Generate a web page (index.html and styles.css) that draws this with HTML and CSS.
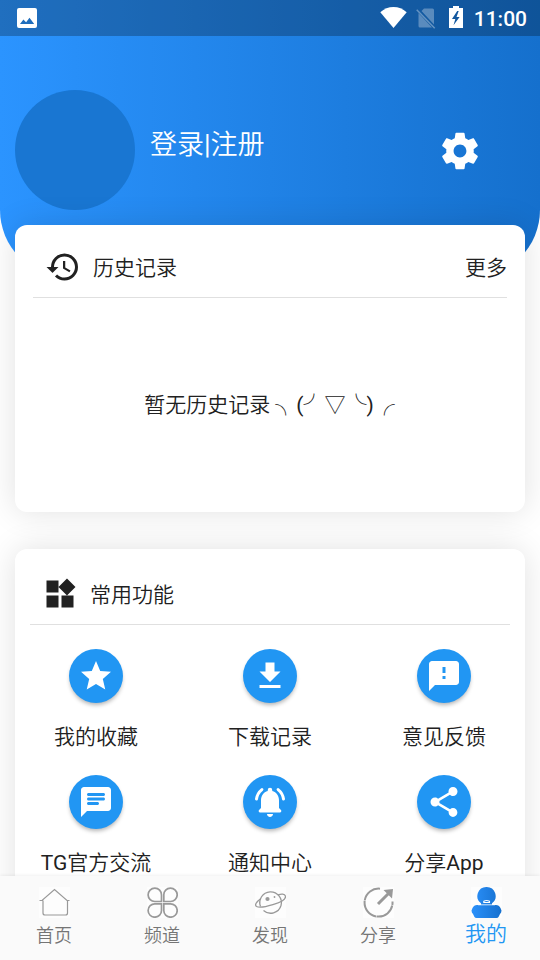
FILE: index.html
```html
<!DOCTYPE html>
<html lang="zh-CN">
<head>
<meta charset="utf-8">
<title>我的</title>
<link rel="stylesheet" href="styles.css">
</head>
<body>
<div class="app">
  <main class="content">
    <header class="header">
      <div class="status">
        <svg class="photo" width="20" height="20" viewBox="0 0 20 20"><path fill="#fff" fill-rule="evenodd" d="M2 0h16a2 2 0 0 1 2 2v16a2 2 0 0 1-2 2H2a2 2 0 0 1-2-2V2a2 2 0 0 1 2-2zM3 16h14.200l-4.700-6.200-3.400 4.500-2.700-2.800z"/></svg>
        <svg class="wifi" width="27" height="21" viewBox="0 0 27 21"><path fill="#fff" d="M.3 5.200C4.200 1.800 8.500 0 13.500 0s9.300 1.800 13.200 5.200L13.500 21z"/></svg>
        <svg class="sim" width="20" height="21" viewBox="0 0 20 21"><path fill="#fff" fill-opacity=".3" d="M8 .5h8.500a1.500 1.500 0 0 1 1.500 1.500v14.500L5.500 3zM2.500 5L16 19.500H4a1.500 1.500 0 0 1-1.500-1.500z"/><path d="M.7 1.700L18.700 20.300" stroke="#fff" stroke-opacity=".35" stroke-width="1.500"/></svg>
        <svg class="battery" width="14" height="22" viewBox="0 0 14 22"><path fill="#fff" fill-rule="evenodd" d="M4 0h6v2h4v20H0V2h4zM8.200 5L3 13h3.300l-1.800 6.200L10.600 11H7.500L9.700 5z"/></svg>
        <span class="clock">11:00</span>
      </div>
      <div class="profile">
        <div class="avatar"></div>
        <div class="login">登录|注册</div>
        <svg class="gear" width="44" height="44" viewBox="0 0 24 24"><path fill="#fff" d="M19.430 12.980c.04-.32.07-.64.07-.98s-.03-.66-.07-.98l2.110-1.650c.19-.15.24-.42.12-.64l-2-3.460c-.12-.22-.39-.3-.61-.22l-2.490 1c-.52-.4-1.080-.73-1.690-.98l-.38-2.650C14.460 2.180 14.250 2 14 2h-4c-.25 0-.46.18-.49.42l-.38 2.650c-.61.25-1.170.59-1.690.98l-2.490-1c-.23-.09-.49 0-.61.22l-2 3.460c-.13.22-.07.49.12.64l2.110 1.650c-.04.32-.07.65-.07.98s.03.66.07.98l-2.110 1.650c-.19.15-.24.42-.12.64l2 3.460c.12.22.39.3.61.22l2.490-1c.52.4 1.080.73 1.690.98l.38 2.650c.03.24.24.42.49.42h4c.25 0 .46-.18.49-.42l.38-2.650c.61-.25 1.170-.59 1.690-.98l2.490 1c.23.09.49 0 .61-.22l2-3.460c.12-.22.07-.49-.12-.64l-2.110-1.650zM12 15.500c-1.930 0-3.500-1.570-3.500-3.500s1.570-3.500 3.500-3.500 3.500 1.570 3.500 3.500-1.570 3.500-3.500 3.500z"/></svg>
      </div>
    </header>

    <section class="card history">
      <div class="card-head">
        <svg width="36" height="36" viewBox="0 0 24 24"><path fill="#212121" d="M13 3a9 9 0 0 0-9 9H1l3.890 3.890.07.14L9 12H6c0-3.870 3.130-7 7-7s7 3.130 7 7-3.130 7-7 7c-1.930 0-3.680-.79-4.940-2.060l-1.420 1.420A8.950 8.950 0 0 0 13 21a9 9 0 0 0 0-18zm-1 5v5l4.280 2.540.72-1.210-3.500-2.080V8H12z"/></svg>
        <h2>历史记录</h2>
        <span class="more">更多</span>
      </div>
      <p class="empty">暂无历史记录 ╮(╯▽╰)╭</p>
    </section>

    <section class="card tools">
      <div class="card-head">
        <svg width="36" height="36" viewBox="0 0 24 24"><path fill="#212121" d="M13 13v8h8v-8h-8zM3 21h8v-8H3v8zM3 3v8h8V3H3zm13.660-1.310L11 7.340 16.660 13l5.660-5.660-5.660-5.650z"/></svg>
        <h2>常用功能</h2>
      </div>
      <div class="grid">
        <div class="item"><i class="disc"><svg width="36" height="36" viewBox="0 0 24 24"><path d="M12 17.270L18.180 21l-1.640-7.030L22 9.240l-7.190-.61L12 2 9.190 8.630 2 9.240l5.460 4.730L5.820 21z"/></svg></i><span>我的收藏</span></div>
        <div class="item"><i class="disc"><svg width="36" height="36" viewBox="0 0 24 24"><path d="M19 9h-4V3H9v6H5l7 7 7-7zM5 18v2h14v-2H5z"/></svg></i><span>下载记录</span></div>
        <div class="item"><i class="disc"><svg width="36" height="36" viewBox="0 0 24 24"><path d="M20 2H4c-1.100 0-1.990.9-1.990 2L2 22l4-4h14c1.100 0 2-.9 2-2V4c0-1.100-.9-2-2-2zm-7 12h-2v-2h2v2zm0-4h-2V6h2v4z"/></svg></i><span>意见反馈</span></div>
        <div class="item"><i class="disc"><svg width="36" height="36" viewBox="0 0 24 24"><path d="M20 2H4c-1.100 0-2 .9-2 2v18l4-4h14c1.100 0 2-.9 2-2V4c0-1.100-.9-2-2-2zM7 9h10c.55 0 1 .45 1 1s-.45 1-1 1H7c-.55 0-1-.45-1-1s.45-1 1-1zm6 5H7c-.55 0-1-.45-1-1s.45-1 1-1h6c.55 0 1 .45 1 1s-.45 1-1 1zm4-6H7c-.55 0-1-.45-1-1s.45-1 1-1h10c.55 0 1 .45 1 1s-.45 1-1 1z"/></svg></i><span>TG官方交流</span></div>
        <div class="item"><i class="disc"><svg width="36" height="36" viewBox="0 0 24 24"><path d="M18 16v-5c0-3.070-1.630-5.640-4.500-6.320V4a1.500 1.500 0 0 0-3 0v.68C7.640 5.360 6 7.920 6 11v5l-1.300 1.300c-.6.600-.2 1.700.7 1.700h13.200c.9 0 1.300-1.100.7-1.700zM12 22c1.100 0 2-.9 2-2h-4c0 1.100.9 2 2 2z"/><path d="M6.600 3.700Q3.500 6.200 3 10M17.400 3.700Q20.500 6.200 21 10" fill="none" stroke="#fff" stroke-width="2" stroke-linecap="round"/></svg></i><span>通知中心</span></div>
        <div class="item"><i class="disc"><svg width="36" height="36" viewBox="0 0 24 24"><path d="M18 16.080c-.76 0-1.440.3-1.960.77L8.910 12.700c.05-.23.09-.46.09-.7s-.04-.47-.09-.7l7.050-4.110c.54.5 1.250.81 2.040.81 1.660 0 3-1.340 3-3s-1.340-3-3-3-3 1.340-3 3c0 .24.04.47.09.7L8.040 9.810C7.500 9.310 6.790 9 6 9c-1.660 0-3 1.340-3 3s1.340 3 3 3c.79 0 1.500-.31 2.040-.81l7.120 4.160c-.05.21-.08.43-.08.65 0 1.610 1.310 2.920 2.920 2.920s2.920-1.310 2.920-2.920-1.310-2.920-2.920-2.920z"/></svg></i><span>分享App</span></div>
      </div>
    </section>
  </main>

  <nav class="nav">
    <a class="tab"><svg width="31" height="31" viewBox="0 0 31 31"><path d="M.5 13.500h2.500L15.500 2.500 28 13.500h2.500M4 13.500V26q0 2 2 2h20.500q2 0 2-2V13.500" fill="none" stroke="#999" stroke-width="1.200"/></svg><span>首页</span></a>
    <a class="tab"><svg width="31" height="31" viewBox="0 0 31 31"><g fill="none" stroke="#999" stroke-width="1.700"><path d="M14.500 14.500V8A6.700 6.700 0 1 0 8 14.500z"/><path d="M16.800 14.500V8A6.700 6.700 0 1 1 23.300 14.500z"/><path d="M14.500 16.800V23.300A6.700 6.700 0 1 1 8 16.800z"/><path d="M16.800 16.800V23.300A6.700 6.700 0 1 0 23.300 16.800z"/></g></svg><span>频道</span></a>
    <a class="tab"><svg width="31" height="31" viewBox="0 0 31 31"><g fill="none" stroke="#999" stroke-width="1.300"><path d="M5.500 19.500A10.800 10.800 0 1 1 26 18.500 10.800 10.800 0 0 1 8.500 23.500"/><path d="M6 11.500C1 15 -.5 18 1.500 19.500 6 22 31 15.500 30.500 9.500 30 6.500 26 7 23 7.800"/></g><circle cx="12.500" cy="12" r="2.100" fill="#999"/><circle cx="19.500" cy="10" r=".9" fill="#999"/></svg><span>发现</span></a>
    <a class="tab"><svg width="31" height="31" viewBox="0 0 31 31"><g fill="none" stroke="#999"><path d="M17 1.700A14 14 0 1 0 29.500 14.500" stroke-width="2" stroke-dasharray="21 .5"/><path d="M15 17L27 5" stroke-width="3"/></g><path d="M20.500 3L30 2l-1 9.500-3-3-5.500-5.500z" fill="#999"/></svg><span>分享</span></a>
    <a class="tab active"><svg width="31" height="31" viewBox="0 0 31 31"><defs><linearGradient id="person"><stop stop-color="#2b91fb"/><stop offset="1" stop-color="#1670ce"/></linearGradient></defs><path fill="url(#person)" d="M15.500 0a9 9 0 0 1 5.500 16.200V18h4q3 0 4.500 3l1 2.500q0 2-1.500 3.500L27.500 30q-.5 1-2 1H5.500q-1.500 0-2-1L2 27Q.5 25.500.5 23.500L1.500 21Q3 18 6 18h4v-1.800A9 9 0 0 1 15.500 0z"/><path d="M7 17.800h17" stroke="#fff" stroke-width=".8"/><path d="M12.800 15.500v-1.300q2.700-1.500 5.700 0v1.300z" fill="none" stroke="#fff" stroke-width="1.100"/></svg><span>我的</span></a>
  </nav>
</div>
</body>
</html>
```
FILE: styles.css
```css
* {
  box-sizing: border-box;
}

body {
  margin: 0;
  background: #fff;
  color: #212121;
  font: 21px/30px Roboto, "Noto Sans CJK SC DemiLight", "Noto Sans CJK SC", sans-serif;
}

svg {
  display: block;
  flex: none;
}

.app {
  display: flex;
  flex-direction: column;
  height: 960px;
  overflow: hidden;
}

.content {
  flex: 1;
  min-height: 0;
  overflow: hidden;
}

.header {
  height: 277px;
  margin-bottom: -52px;
  overflow: hidden;
  border-radius: 0 0 67px 67px;
  background: linear-gradient(90deg, #2b94ff, #1570cd);
}

.status {
  display: flex;
  align-items: flex-start;
  height: 36px;
  padding: 6px 13px 0 17px;
  background: rgba(0, 0, 0, 0.25);
}

.photo {
  margin-top: 2px;
}

.wifi {
  margin: 1px 9px 0 auto;
}

.sim {
  margin: 2px 13px 0 0;
}

.clock {
  margin-left: 11px;
  color: #fff;
  font-weight: 500;
  line-height: 26px;
}

.profile {
  display: flex;
  align-items: center;
  padding: 54px 58px 0 15px;
}

.gear {
  margin-top: 1px;
}

.avatar {
  width: 120px;
  height: 120px;
  border-radius: 50%;
  background: #1976d2;
}

.login {
  margin: 0 auto 10px 15px;
  color: #fff;
  font-size: 27px;
  line-height: 36px;
}

.card {
  position: relative;
  margin: 0 15px;
  border-radius: 12px;
  background: #fff;
  box-shadow: 0 0 32px rgba(0, 0, 0, 0.12);
}

.history {
  height: 286.500px;
  padding: 0 18px;
}

.card-head {
  display: flex;
  align-items: center;
  height: 73px;
  padding: 12px 0 0 12px;
  border-bottom: 1px solid #e0e0e0;
}

.card-head h2,
.more {
  margin: 2px 0 0;
  font-size: 21px;
  font-weight: 400;
}

.card-head h2 {
  padding-left: 12px;
}

.card-head .more {
  margin-left: auto;
}

.empty {
  margin: 92px 0.500px 0 -0.500px;
  text-align: center;
}

.tools {
  height: 400px;
  margin-top: 37px;
  padding: 0 15px;
}

.tools .card-head {
  height: 76.500px;
  padding: 15px 0 0 12px;
}

.grid {
  display: grid;
  grid-template-columns: repeat(3, 174px);
  grid-auto-rows: 126px;
  justify-content: center;
  padding-top: 24px;
}

.item {
  display: flex;
  flex-direction: column;
  align-items: center;
  gap: 19px;
}

.disc {
  display: grid;
  place-items: center;
  width: 54px;
  height: 54px;
  border-radius: 50%;
  background: #2196f3;
  box-shadow: 0 3px 4px -1px rgba(0, 0, 0, 0.3);
}

.disc svg {
  fill: #fff;
}

.nav {
  position: relative;
  display: flex;
  height: 84px;
  background: #fafafa;
  box-shadow: 0 -1px 3px rgba(0, 0, 0, 0.06);
}

.tab {
  display: flex;
  flex: 1;
  flex-direction: column;
  align-items: center;
  padding-top: 11px;
  color: #757575;
  font-size: 18px;
  line-height: 36px;
}

.tab svg {
  background: #fdfdfd;
}

.active {
  color: #2196f3;
  font-size: 21px;
  line-height: 33px;
}
```
